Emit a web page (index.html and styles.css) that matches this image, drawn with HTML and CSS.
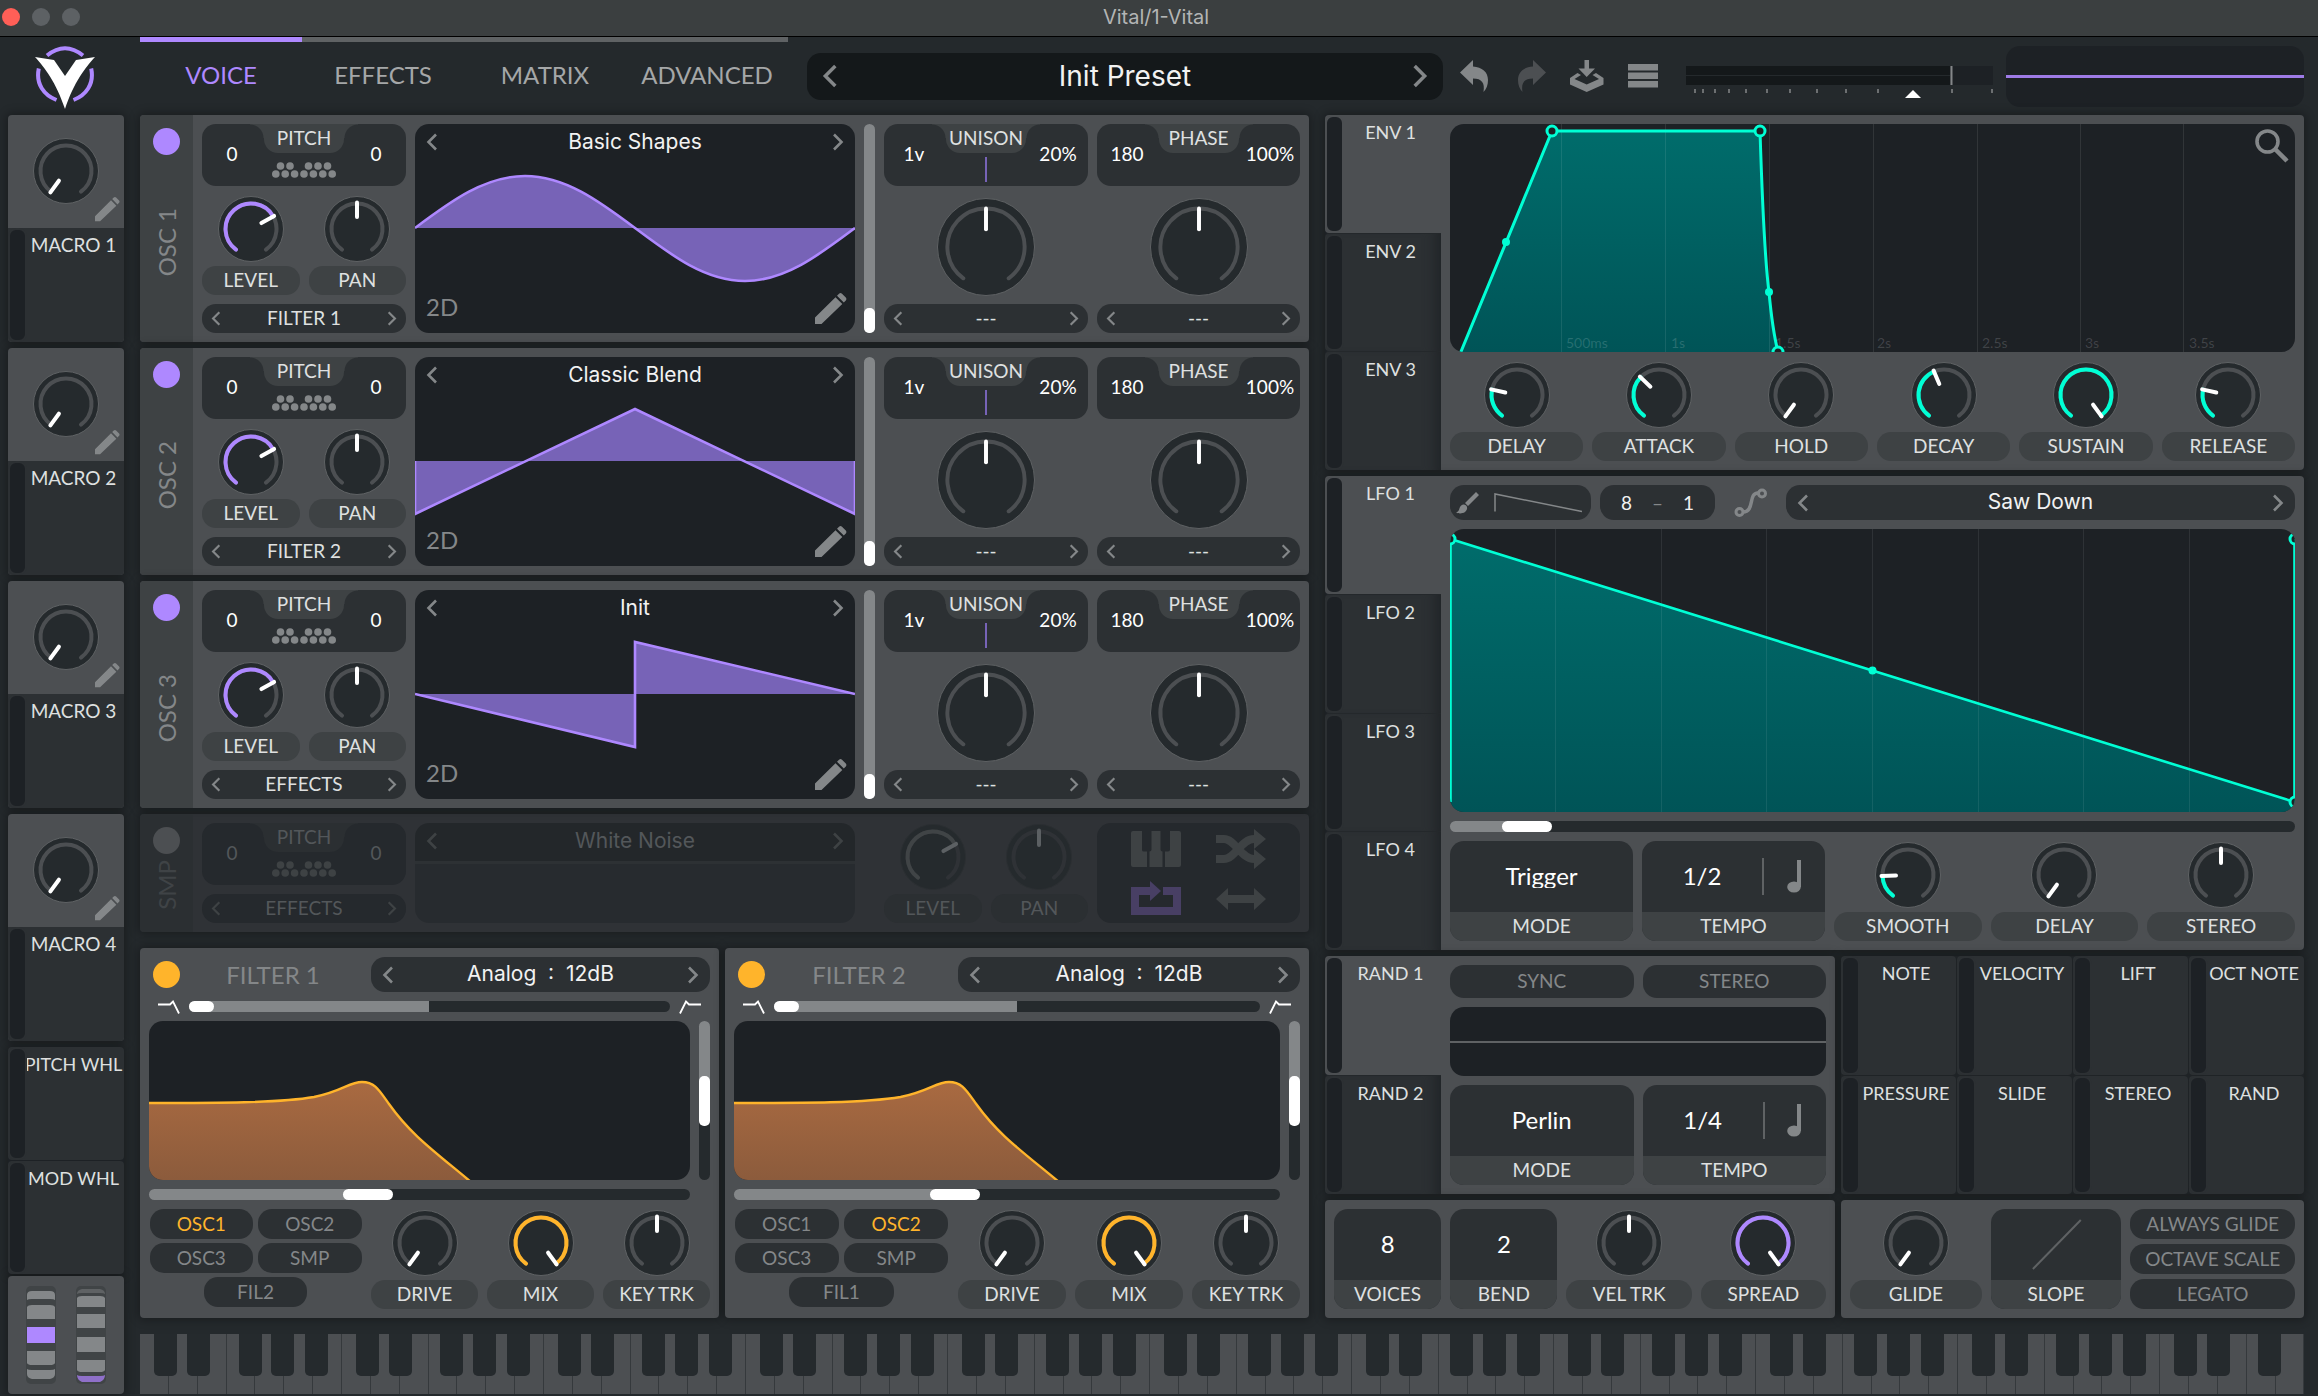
FILE: index.html
```
<!DOCTYPE html>
<html lang="en">
<head>
  <meta charset="UTF-8" />
  <meta name="viewport" content="width=device-width, initial-scale=1.0" />
  <title>Vital/1-Vital</title>
  <link rel="stylesheet" href="styles.css">
</head>
<body>
  <svg class="defs" aria-hidden="true">
    <defs>
      <linearGradient id="teal" x1="0" y1="0" x2="0" y2="1">
        <stop offset="0" stop-color="#006c6b" />
        <stop offset="1" stop-color="#005457" />
      </linearGradient>
      <linearGradient id="amber" x1="0" y1="0" x2="0" y2="1">
        <stop offset="0" stop-color="#a96a41" />
        <stop offset="1" stop-color="#8b5b3c" />
      </linearGradient>
    </defs>
    <symbol id="left" viewBox="0 0 12 18"><path d="M10 1.5L2.5 9l7.500 7.500" fill="none" stroke="currentColor" stroke-width="2.600" /></symbol>
    <symbol id="right" viewBox="0 0 12 18"><path d="M2 1.5L9.500 9 2 16.500" fill="none" stroke="currentColor" stroke-width="2.600" /></symbol>
    <symbol id="pencil" viewBox="0 0 32 32"><path d="M0 31v-6.500L20.500 4.300l6.800 6.800L6.500 31zM22 2.700l2-2q1.500-1.200 3 0l3.800 3.800q1.200 1.500 0 3l-2 2z" fill="currentColor" /></symbol>
    <symbol id="undo" viewBox="0 0 30 33"><path d="M0 12.500L13 0v6.500C22 7 28 12 28 20c0 5-1.500 9-4.500 12C25 23 22 18.500 13 18.500V25z" fill="currentColor" /></symbol>
    <symbol id="save" viewBox="0 0 34 32"><path d="M14.500 0h4.500v8.500h6L16.700 17 8.500 8.500h6zM0 18l7.500-5 3.500 2-6.500 4 12.200 5.500L29 19l-6.500-4 3.500-2 7.500 5v6.500L16.700 32 0 24.500z" fill="currentColor" /></symbol>
    <symbol id="menu" viewBox="0 0 30 24"><path d="M0 0h30v6.500H0zM0 8.500h30V15H0zM0 17h30v6.500H0z" fill="currentColor" /></symbol>
    <symbol id="zoom" viewBox="0 0 34 34"><circle cx="12.500" cy="12.500" r="10.500" fill="none" stroke="currentColor" stroke-width="3.600" /><path d="M20 20l12 12" stroke="currentColor" stroke-width="4.500" /></symbol>
    <symbol id="note" viewBox="0 0 16 33"><ellipse cx="7" cy="27" rx="6.800" ry="5.500" fill="currentColor" /><path d="M10 0h4v27h-4z" fill="currentColor" /></symbol>
    <symbol id="dots" viewBox="0 0 64 16">
      <g fill="currentColor"><circle cx="8.500" cy="4" r="3.800" /><circle cx="18" cy="4" r="3.800" /><circle cx="36.500" cy="4" r="3.800" /><circle cx="46" cy="4" r="3.800" /><circle cx="55.500" cy="4" r="3.800" /><circle cx="3.800" cy="12" r="3.800" /><circle cx="13.200" cy="12" r="3.800" /><circle cx="22.600" cy="12" r="3.800" /><circle cx="32" cy="12" r="3.800" /><circle cx="41.400" cy="12" r="3.800" /><circle cx="50.800" cy="12" r="3.800" /><circle cx="60.200" cy="12" r="3.800" /></g>
    </symbol>
    <symbol id="lowpass" viewBox="0 0 22 14"><path d="M0 4.500h12l3-3 6 12" fill="none" stroke="#fff" stroke-width="1.800" /></symbol>
    <symbol id="highpass" viewBox="0 0 22 14"><path d="M22 4.500H10l-3-3-6 12" fill="none" stroke="#fff" stroke-width="1.800" /></symbol>
  </svg>

  <div class="titlebar">
    <span class="light close"></span><span class="light"></span><span class="light"></span>
    <h1>Vital/1-Vital</h1>
  </div>

  <header class="header">
    <svg class="logo" viewBox="0 0 62 64" role="img" aria-label="Vital">
      <g fill="none" stroke="#ae88ff" stroke-width="4">
        <path d="M13 9.500Q31-5 49 9.500M4.800 22.500C1.500 38 10 49 22.500 54M57.200 22.500C60.500 38 52 49 39.500 54" />
      </g>
      <path d="M1 11l19 3 11 16 11-16 19-3C51 22 40 36 31 63 22 36 11 22 1 11z" fill="#fff" />
    </svg>
    <nav class="tabs">
      <a class="tab active" href="#">VOICE</a>
      <a class="tab" href="#">EFFECTS</a>
      <a class="tab" href="#">MATRIX</a>
      <a class="tab" href="#">ADVANCED</a>
    </nav>
    <div class="preset">
      <button aria-label="Previous preset"><svg><use href="#left" /></svg></button>
      <span>Init Preset</span>
      <button aria-label="Next preset"><svg><use href="#right" /></svg></button>
    </div>
    <div class="actions">
      <button aria-label="Undo"><svg width="30" height="33"><use href="#undo" /></svg></button>
      <button aria-label="Redo" disabled><svg class="mirror" width="30" height="33"><use href="#undo" /></svg></button>
      <button aria-label="Save"><svg width="34" height="32"><use href="#save" /></svg></button>
      <button aria-label="Menu"><svg width="30" height="24"><use href="#menu" /></svg></button>
    </div>
    <svg class="meter" viewBox="0 0 307 44">
      <path d="M265 12h42v19h-42z" fill="#1d2125" />
      <path d="M0 12h264v9H0zM0 22h264v9H0z" fill="#14181a" />
      <path d="M265.500 12v19" stroke="#848789" stroke-width="2" />
      <path d="M9 35v4M17 35v4M29 35v4M43 35v4M60 35v4M81 35v4M104 35v4M131 35v4M160 35v4M192 35v4M266 35v4M306 35v4" stroke="#6c6f71" stroke-width="2" />
      <path d="M219 44l8-8 8 8z" fill="#fff" />
    </svg>
    <div class="scope"></div>
  </header>

  <div class="synth">
    <aside class="sidebar">
      <section class="macro"><div class="macro-top"><div data-knob="0" data-name="Macro 1"></div><svg><use href="#pencil" /></svg></div><div class="mod">MACRO 1</div></section>
      <section class="macro"><div class="macro-top"><div data-knob="0" data-name="Macro 2"></div><svg><use href="#pencil" /></svg></div><div class="mod">MACRO 2</div></section>
      <section class="macro"><div class="macro-top"><div data-knob="0" data-name="Macro 3"></div><svg><use href="#pencil" /></svg></div><div class="mod">MACRO 3</div></section>
      <section class="macro"><div class="macro-top"><div data-knob="0" data-name="Macro 4"></div><svg><use href="#pencil" /></svg></div><div class="mod">MACRO 4</div></section>
      <div class="wheel-mods">
        <div class="mod">PITCH WHL</div>
        <div class="mod">MOD WHL</div>
      </div>
      <div class="wheels">
        <svg viewBox="0 0 30 98">
          <rect width="30" height="98" rx="5" fill="#404446" />
          <path d="M1 14V9q0-4 5-4h18q5 0 5 4v5q-1-1-5-1H6q-4 0-5 1zM1 33V21q1-2 5-2h18q4 0 5 2v12zM1 65h28v12q-1 2-5 2H6q-4 0-5-2zM1 83q1 1 5 1h18q4 0 5-1v5q0 4-5 5H6q-5-1-5-5z" fill="#848789" />
          <path d="M1 41h28v16H1z" fill="#ae88ff" />
        </svg>
        <svg viewBox="0 0 30 98">
          <rect width="30" height="98" rx="5" fill="#404446" />
          <path d="M1 8q0-4 5-5h18q5 1 5 5-1-1-5-1H6q-4 0-5 1z" fill="#5f6264" />
          <path d="M1 21v-9q1-2 5-2h18q4 0 5 2v9zM1 28h28v14H1zM1 51h28v15H1zM1 74h28v10q-1 2-5 2H6q-4 0-5-2z" fill="#848789" />
          <path d="M1 89q1 1 5 1h18q4 0 5-1 0 5-5 7H6q-5-2-5-7z" fill="#8f70c9" />
        </svg>
      </div>
    </aside>

    <main class="main">
      <div class="columns">
        <div class="left">
          <div id="oscillators" class="oscillators"></div>

          <section class="panel osc smp">
            <div class="strip"><input type="checkbox" class="power" aria-label="Sample on" /><h2>SMP</h2></div>
            <div class="osc-body">
              <div class="stack">
                <div class="valuebox"><span>0</span><b>PITCH</b><svg class="keydots"><use href="#dots" /></svg><span>0</span></div>
                <div data-stepper="EFFECTS" data-name="Sample destination"></div>
              </div>
              <div class="display sample">
                <div class="display-nav"><button aria-label="Previous sample"><svg><use href="#left" /></svg></button><span>White Noise</span><button aria-label="Next sample"><svg><use href="#right" /></svg></button></div>
              </div>
              <span></span>
              <div class="knob-row">
                <div data-knob="71" data-label="LEVEL" data-color="#404446"></div>
                <div data-knob="50" data-label="PAN"></div>
              </div>
              <div class="sample-modes">
                <button aria-label="Keytrack"><svg viewBox="0 0 50 36"><path d="M2 0h9v19q0 1.500 2 1.500h3V36H2q-2 0-2-2V2q0-2 2-2zM18.500 20.500q2 0 2-2V0h9v18.500q0 2 2 2V36h-13zM39 0h9q2 0 2 2v32q0 2-2 2H34V20.500h3q2 0 2-2z" fill="currentColor" /></svg></button>
                <button aria-label="Random phase"><svg viewBox="0 0 50 40"><path d="M0 10h8c11 0 17 20 30 20M0 30h8c11 0 17-20 30-20" fill="none" stroke="currentColor" stroke-width="8" /><path d="M38 0l12 10-12 10zM38 20l12 10-12 10z" fill="currentColor" /></svg></button>
                <button class="on" aria-label="Loop"><svg viewBox="0 0 50 36"><path d="M20 10H4v20h42V10H32" fill="none" stroke="currentColor" stroke-width="8" /><path d="M19 0l11 10-11 10z" fill="currentColor" /></svg></button>
                <button aria-label="Bounce"><svg viewBox="0 0 50 22"><path d="M0 11L12 0v7h26V0l12 11-12 11v-7H12v7z" fill="currentColor" /></svg></button>
              </div>
            </div>
          </section>

          <div id="filters" class="filters"></div>
        </div>

        <div class="right">
          <section class="panel modulator">
            <div class="mod-tabs">
              <button class="mod active">ENV 1</button>
              <button class="mod">ENV 2</button>
              <button class="mod">ENV 3</button>
            </div>
            <div class="mod-body">
              <div class="display env">
                <svg viewBox="0 0 845 228" preserveAspectRatio="none">
                  <path d="M10 228L102 7h208C312 70 314 130 319 168c2 22 5 44 9 60z" fill="url(#teal)" />
                  <path d="M111.500 0v228M215.500 0v228M319.500 0v228M423.500 0v228M527.500 0v228M630.500 0v228M733.500 0v228" stroke="#fff" stroke-opacity=".09" />
                  <g fill="#fff" fill-opacity=".16" class="time">
                    <text x="116" y="224">500ms</text><text x="221" y="224">1s</text><text x="325" y="224">1.5s</text><text x="427" y="224">2s</text><text x="532" y="224">2.5s</text><text x="635" y="224">3s</text><text x="739" y="224">3.5s</text>
                  </g>
                  <path d="M10 230L102 7h208C312 70 314 130 319 168c2 22 5 44 9 60" fill="none" stroke="#00ffd5" stroke-width="3" />
                  <circle cx="56" cy="118" r="4" fill="#00ffd5" /><circle cx="319" cy="168" r="4" fill="#00ffd5" />
                  <g fill="#1d2125" stroke="#00ffd5" stroke-width="3"><circle cx="102" cy="7" r="5" /><circle cx="310" cy="7" r="5" /><circle cx="328" cy="228" r="5" /></g>
                </svg>
                <button class="magnify" aria-label="Zoom"><svg width="34" height="34"><use href="#zoom" /></svg></button>
              </div>
              <div class="knob-row">
                <div data-knob="23" data-label="DELAY" data-color="#00ffd5"></div>
                <div data-knob="34" data-label="ATTACK" data-color="#00ffd5"></div>
                <div data-knob="0" data-label="HOLD"></div>
                <div data-knob="42" data-label="DECAY" data-color="#00ffd5"></div>
                <div data-knob="100" data-label="SUSTAIN" data-color="#00ffd5"></div>
                <div data-knob="23" data-label="RELEASE" data-color="#00ffd5"></div>
              </div>
            </div>
          </section>

          <section class="panel modulator">
            <div class="mod-tabs">
              <button class="mod active">LFO 1</button>
              <button class="mod">LFO 2</button>
              <button class="mod">LFO 3</button>
              <button class="mod">LFO 4</button>
            </div>
            <div class="mod-body">
              <div class="lfo-tools">
                <button class="box" aria-label="Paint shape"><svg viewBox="0 0 141 35"><path d="M15 18L26 7l3 3-11 11zM14 19.500c4 1 4 5 1 7.500-3 2-7 1.500-9 .5 3-1 3-3 4-5.500 1-2 2.500-2.800 4-2.500z" fill="#848789" /><path d="M45 26.500V9l87 17.500" fill="none" stroke="#848789" stroke-width="1.500" /></svg></button>
                <div class="box grid-size"><span>8</span><i>–</i><span>1</span></div>
                <button class="bare" aria-label="Smooth"><svg width="34" height="30" viewBox="0 0 34 30"><path d="M9 24c12 0 5-19 15-19" fill="none" stroke="#848789" stroke-width="3.500" /><g fill="none" stroke="#848789" stroke-width="3"><circle cx="5.500" cy="24" r="3.500" /><circle cx="28" cy="5.500" r="3.500" /></g></svg></button>
                <div class="stepper tall wide"><button aria-label="Previous shape"><svg><use href="#left" /></svg></button><select aria-label="LFO shape"><option>Saw Down</option></select><button aria-label="Next shape"><svg><use href="#right" /></svg></button></div>
              </div>
              <div class="display lfo">
                <svg viewBox="0 0 845 283" preserveAspectRatio="none">
                  <path d="M0 10L845 273v10H0z" fill="url(#teal)" />
                  <path d="M105.500 0v283M211.500 0v283M316.500 0v283M422.500 0v283M528.500 0v283M633.500 0v283M739.500 0v283" stroke="#fff" stroke-opacity=".08" />
                  <path d="M.5 273V10L844.500 273V10" fill="none" stroke="#00ffd5" stroke-width="2.600" stroke-linejoin="bevel" />
                  <circle cx="422.500" cy="141.500" r="4" fill="#00ffd5" />
                  <g fill="#1d2125" stroke="#00ffd5" stroke-width="3"><circle cx="0" cy="10" r="5" /><circle cx="845" cy="10" r="5" /><circle cx="845" cy="273" r="5" /></g>
                </svg>
              </div>
              <input type="range" class="slider wide-thumb" step="0.5" value="6.5" style="--fill: 8%" aria-label="LFO rate" />
              <div class="lfo-bottom">
                <div class="choice"><select id="lfo-mode"><option>Trigger</option></select><label for="lfo-mode">MODE</label></div>
                <div class="choice tempo"><select id="lfo-tempo"><option>1/2</option></select><svg><use href="#note" /></svg><label for="lfo-tempo">TEMPO</label></div>
                <div class="knob-row">
                  <div data-knob="18" data-label="SMOOTH" data-color="#00ffd5"></div>
                  <div data-knob="0" data-label="DELAY"></div>
                  <div data-knob="50" data-label="STEREO"></div>
                </div>
              </div>
            </div>
          </section>

          <div class="split">
            <section class="panel modulator">
              <div class="mod-tabs">
                <button class="mod active">RAND 1</button>
                <button class="mod">RAND 2</button>
              </div>
              <div class="mod-body rand">
                <div class="pair"><button class="toggle">SYNC</button><button class="toggle">STEREO</button></div>
                <div class="display rand-view"></div>
                <div class="pair">
                  <div class="choice"><select id="rand-mode"><option>Perlin</option></select><label for="rand-mode">MODE</label></div>
                  <div class="choice tempo"><select id="rand-tempo"><option>1/4</option></select><svg><use href="#note" /></svg><label for="rand-tempo">TEMPO</label></div>
                </div>
              </div>
            </section>
            <section class="sources">
              <div class="mod">NOTE</div><div class="mod">VELOCITY</div><div class="mod">LIFT</div><div class="mod">OCT NOTE</div>
              <div class="mod">PRESSURE</div><div class="mod">SLIDE</div><div class="mod">STEREO</div><div class="mod">RAND</div>
            </section>
          </div>

          <div class="split">
            <section class="panel voices">
              <div class="choice"><input id="voices" value="8" /><label for="voices">VOICES</label></div>
              <div class="choice"><input id="bend" value="2" /><label for="bend">BEND</label></div>
              <div data-knob="50" data-label="VEL TRK"></div>
              <div data-knob="100" data-label="SPREAD" data-color="#ae88ff"></div>
            </section>
            <section class="panel glide">
              <div data-knob="0" data-label="GLIDE"></div>
              <div class="choice"><button id="slope"><svg class="slope" viewBox="0 0 131 71"><path d="M42 60L90 11" stroke="#5f6264" stroke-width="2" /></svg></button><label for="slope">SLOPE</label></div>
              <div class="glide-modes"><button class="toggle">ALWAYS GLIDE</button><button class="toggle">OCTAVE SCALE</button><button class="toggle">LEGATO</button></div>
            </section>
          </div>
        </div>
      </div>

      <div id="keyboard" class="keyboard"></div>
    </main>
  </div>

  <script src="script.js"></script>
</body>
</html>
```

FILE: styles.css
```
* {
  box-sizing: border-box;
}

body {
  margin: 0;
  background: #24292c;
  color: #dfe0e0;
  font-family: Lato, sans-serif;
  font-size: 19px;
  line-height: 24px;
  overflow-x: hidden;
}

h1, h2 {
  margin: 0;
  font-weight: 400;
}

button, input, select {
  font: inherit;
  color: inherit;
  background: none;
  border: 0;
  margin: 0;
  padding: 0;
  min-width: 0;
}

svg {
  display: block;
}

.defs {
  position: absolute;
  width: 0;
  height: 0;
}

/* window + header */

.titlebar {
  display: flex;
  align-items: center;
  gap: 12px;
  height: 37px;
  padding: 0 0 2px 2px;
  background: #3b3f40;
  border-bottom: 1px solid #000;
}

.titlebar h1 {
  flex: 1;
  padding-right: 98px;
  text-align: center;
  font-family: Inter, sans-serif;
  font-size: 20px;
  color: #b3b5b5;
}

.light {
  width: 18px;
  height: 18px;
  border-radius: 50%;
  background: #5d6164;
}

.light.close {
  background: #ff5f57;
}

.header {
  display: flex;
  align-items: center;
  height: 78px;
  padding: 0 14px 0 8px;
}

.logo {
  width: 62px;
  height: 64px;
  margin: 3px 44px 0 26px;
}

.tabs {
  display: flex;
  flex: 0 0 648px;
  align-self: stretch;
}

.tab {
  flex: 1;
  padding-top: 21px;
  border-top: 5px solid #5f6264;
  text-align: center;
  text-decoration: none;
  font-size: 24px;
  color: #a5a7a8;
}

.tab.active {
  border-color: #ae88ff;
  color: #ae88ff;
}

.preset {
  display: flex;
  flex: 1;
  align-items: center;
  justify-content: space-between;
  height: 47px;
  margin: 0 4px 0 19px;
  padding: 0 15px;
  border-radius: 14px;
  background: #14181a;
  color: #f2f2f2;
  font-family: Inter, sans-serif;
  font-size: 28px;
}

.preset svg {
  width: 16px;
  height: 24px;
  color: #848789;
}

.actions {
  display: flex;
  margin-right: 15px;
  color: #848789;
}

.actions button {
  display: flex;
  justify-content: center;
  align-items: center;
  width: 56px;
}

.actions button:disabled {
  color: #4c4f52;
}

.mirror {
  transform: scaleX(-1);
}

.meter {
  width: 307px;
  height: 44px;
}

.scope {
  width: 298px;
  height: 61px;
  margin-left: 13px;
  border-radius: 14px;
  background: linear-gradient(#9e7be6, #9e7be6) center / 100% 3px no-repeat #1d2125;
}

/* page columns */

.synth {
  display: flex;
  gap: 16px;
  padding: 0 14px 2px 8px;
}

.sidebar {
  display: flex;
  flex: 0 0 116px;
  flex-direction: column;
  gap: 6px;
}

.main {
  flex: 1;
  min-width: 0;
}

.columns {
  display: grid;
  grid-template-columns: 1169fr 979fr;
  gap: 16px;
}

.right, .oscillators {
  display: flex;
  flex-direction: column;
  gap: 6px;
}

.panel, .macro, .wheels, .wheel-mods, .sources {
  border-radius: 4px;
  background: #4c4f52;
  box-shadow: 0 0 10px 2px rgba(0, 0, 0, 0.3);
}

/* modulation sources */

.mod {
  display: flex;
  flex: 1;
  align-items: flex-start;
  justify-content: center;
  position: relative;
  padding: 5px 0 0 15px;
  border-radius: 4px;
  background: #2c3033;
  font-size: 18px;
  white-space: nowrap;
}

.mod::before {
  content: "";
  position: absolute;
  left: 0;
  top: 0;
  bottom: 0;
  width: 15px;
  border: 2px solid #2c3033;
  border-radius: 8px;
  background: #1d2125;
}

.mod.active, .mod.active::before {
  border-color: #4c4f52;
}

.mod.active {
  background: #4c4f52;
}

.macro {
  display: flex;
  flex-direction: column;
  height: 227px;
  overflow: hidden;
}

.macro-top {
  position: relative;
  height: 113px;
  padding-top: 23px;
}

.macro-top > svg {
  position: absolute;
  right: 4px;
  bottom: 6px;
  width: 25px;
  height: 25px;
  color: #848789;
}

.macro .mod {
  border-radius: 0;
  font-size: 19px;
}

.wheel-mods {
  display: flex;
  flex-direction: column;
  gap: 1px;
  height: 227px;
  margin-bottom: -4px;
  background: #1d2125;
}

.wheels {
  display: flex;
  justify-content: center;
  gap: 20px;
  height: 118px;
  padding-top: 10px;
}

.wheels svg {
  width: 30px;
  height: 98px;
}

/* knobs */

.knob-cell {
  display: flex;
  flex-direction: column;
  align-items: center;
  min-width: 0;
  height: 100px;
  padding-top: 1px;
}

.knob {
  position: relative;
  width: 66px;
  height: 66px;
  margin: 0 auto;
}

.knob svg {
  width: 100%;
  height: 100%;
}

.knob input {
  position: absolute;
  inset: 0;
  width: 100%;
  height: 100%;
  opacity: 0;
}

.knob-cell label {
  width: 100%;
  height: 29px;
  margin-top: 4px;
  border-radius: 14px;
  background: #3e4244;
  text-align: center;
  line-height: 28px;
}

.knob-cell.big {
  padding-top: 3px;
}

.big .knob {
  width: 98px;
  height: 98px;
}

.knob-row {
  display: grid;
  grid-auto-flow: column;
  grid-auto-columns: 1fr;
  gap: 9px;
}

/* oscillators */

.osc {
  display: flex;
}

.strip {
  display: flex;
  flex: 0 0 53px;
  flex-direction: column;
  align-items: center;
  border-radius: 4px 0 0 4px;
  background: #3e4244;
}

.strip h2 {
  margin-top: 53px;
  writing-mode: vertical-rl;
  transform: rotate(180deg);
  font-size: 24px;
  line-height: 28px;
  color: #848789;
}

.power {
  appearance: none;
  flex: none;
  width: 27px;
  height: 27px;
  margin-top: 13px;
  border-radius: 50%;
  background: #4c4f52;
}

.power:checked {
  background: var(--accent, #ae88ff);
}

.osc-body {
  display: grid;
  flex: 1;
  grid-template-columns: 204px 1fr 11px 204px 203px;
  gap: 9px;
  padding: 9px;
}

.stack {
  display: flex;
  flex-direction: column;
  gap: 9px;
}

.valuebox {
  display: grid;
  position: relative;
  grid-template-columns: 60px 1fr 60px;
  height: 62px;
  border-radius: 14px;
  background: #2c3033;
  text-align: center;
}

.valuebox span {
  grid-row: 1;
  grid-column: 1;
  padding-top: 18px;
  color: #fff;
}

.valuebox span:last-child {
  grid-column: 3;
}

.valuebox b {
  grid-row: 1;
  grid-column: 2;
  justify-self: center;
  position: relative;
  width: 80px;
  height: 29px;
  border-radius: 0 0 14px 14px;
  background: #3e4244;
  font-weight: 400;
  line-height: 28px;
}

.valuebox b::before, .valuebox b::after {
  content: "";
  position: absolute;
  top: 0;
  left: -14px;
  width: 14px;
  height: 14px;
  background: radial-gradient(circle at 0 100%, transparent 13px, #3e4244 14px);
}

.valuebox b::after {
  left: 80px;
  background: radial-gradient(circle at 100% 100%, transparent 13px, #3e4244 14px);
}

.keydots {
  grid-row: 1;
  grid-column: 2;
  place-self: end center;
  width: 64px;
  height: 16px;
  margin-bottom: 8px;
  color: #848789;
}

.unison-line {
  grid-row: 1;
  grid-column: 2;
  place-self: end center;
  width: 2px;
  height: 25px;
  margin-bottom: 4px;
  background: #7763b7;
}

.stepper {
  display: flex;
  align-items: center;
  height: 29px;
  padding: 0 9px;
  border-radius: 14px;
  background: #2c3033;
}

.stepper select {
  flex: 1;
  appearance: none;
  padding-bottom: 1px;
  text-align: center;
  text-align-last: center;
}

.stepper svg {
  width: 10px;
  height: 15px;
  color: #848789;
}

.stepper.tall {
  height: 35px;
  padding: 0 11px;
}

.stepper.tall svg {
  width: 12px;
  height: 18px;
}

.wide, .display-nav {
  font-family: Inter, sans-serif;
  font-size: 21px;
  color: #f2f2f2;
}

.display {
  position: relative;
  overflow: hidden;
  border-radius: 14px;
  background: #1d2125;
}

.wave {
  height: 209px;
}

.display > svg {
  width: 100%;
  height: 100%;
}

.display-nav {
  display: flex;
  position: absolute;
  top: 0;
  left: 0;
  right: 0;
  align-items: center;
  justify-content: space-between;
  height: 35px;
  padding: 0 11px;
}

.display-nav svg {
  width: 12px;
  height: 18px;
  color: #848789;
}

.wave-mode {
  position: absolute;
  left: 11px;
  bottom: 12px;
  font-size: 24px;
  line-height: 28px;
  color: #848789;
}

.wave .edit {
  position: absolute;
  right: 8px;
  bottom: 8px;
  color: #848789;
}

.edit svg {
  width: 32px;
  height: 32px;
}

.smp {
  --off: #53575a;
  margin-top: 6px;
  background: #2f3236;
  color: var(--off);
}

.smp .strip {
  background: #2b2f32;
}

.smp .strip h2 {
  margin-top: 6px;
  color: #3f4346;
}

.smp .valuebox, .smp .stepper, .smp .sample-modes {
  background: #25292d;
}

.smp .valuebox b, .smp .knob-cell label {
  background: #2b2f32;
}

.smp .valuebox b::before {
  background: radial-gradient(circle at 0 100%, transparent 13px, #2b2f32 14px);
}

.smp .valuebox b::after {
  background: radial-gradient(circle at 100% 100%, transparent 13px, #2b2f32 14px);
}

.smp .valuebox span, .smp .display-nav {
  color: var(--off);
}

.smp .keydots, .smp .stepper svg, .smp .display-nav svg {
  color: #3e4244;
}

.sample {
  background: linear-gradient(#23272a 38px, #2d3134 38px, #2d3134 41px, #272b2f 41px);
}

.sample-modes {
  display: grid;
  grid-template-columns: 1fr 1fr;
  place-items: center;
  padding: 0 16px;
  border-radius: 14px;
  color: #3e4244;
}

.sample-modes svg {
  width: 50px;
}

.sample-modes .on {
  color: #483f64;
}

.osc-slider, .filter-slider {
  appearance: none;
  width: 11px;
  height: 100%;
  writing-mode: vertical-lr;
  direction: rtl;
  border-radius: 6px;
  background: #848789;
}

.osc-slider::-webkit-slider-thumb {
  appearance: none;
  width: 11px;
  height: 25px;
  border-radius: 5px;
  background: #fff;
}

.slider {
  appearance: none;
  display: block;
  width: 100%;
  height: 11px;
  border-radius: 6px;
  background: linear-gradient(to right, #848789 var(--fill), #252a2d var(--fill));
}

.slider::-webkit-slider-thumb {
  appearance: none;
  width: 25px;
  height: 11px;
  border-radius: 6px;
  background: #fff;
}

.wide-thumb::-webkit-slider-thumb {
  width: 50px;
}

/* filters */

.filters {
  display: grid;
  grid-template-columns: 579fr 584fr;
  gap: 6px;
  margin-top: 16px;
}

.filter {
  --accent: #ffb42b;
  display: flex;
  flex-direction: column;
  gap: 9px;
  padding: 9px;
}

.filter-top, .filter-bottom {
  display: grid;
  grid-template-columns: 213fr 339fr;
  gap: 9px;
}

.filter-title {
  display: flex;
  align-items: center;
}

.filter-title .power {
  margin: 0 4px;
}

.filter-title h2 {
  flex: 1;
  text-align: center;
  font-size: 24px;
  color: #848789;
}

.blend {
  display: flex;
  align-items: center;
  gap: 9px;
  height: 11px;
  padding: 0 9px;
}

.blend svg {
  flex: none;
  width: 22px;
  height: 14px;
}

.filter-view {
  display: grid;
  grid-template-columns: 1fr 11px;
  gap: 9px;
}

.filter-view .display {
  height: 159px;
}

.filter-slider {
  background: linear-gradient(#848789 50%, #252a2d 50%);
}

.filter-slider::-webkit-slider-thumb {
  appearance: none;
  width: 11px;
  height: 50px;
  border-radius: 5px;
  background: #fff;
}

.inputs {
  display: flex;
  flex-wrap: wrap;
  justify-content: center;
  align-content: flex-start;
  gap: 4px 5px;
}

.toggle {
  height: 30px;
  padding-bottom: 1px;
  border-radius: 14px;
  background: #2c3033;
  color: #848789;
}

.inputs .toggle {
  width: calc(50% - 3px);
}

.toggle.on {
  color: #ffb42b;
}

/* right column */

.modulator {
  display: flex;
}

.mod-tabs {
  display: flex;
  flex: 0 0 116px;
  flex-direction: column;
  background: #1d2125;
}

.mod-tabs .mod {
  border-top: 1px solid #24282b;
  border-radius: 4px 0 0 4px;
}

.mod-tabs .mod:not(.active) {
  box-shadow: inset -16px 0 14px -12px #1f2326;
}

.mod-tabs .mod.active {
  border-top: 0;
}

.mod-body {
  display: flex;
  flex: 1;
  min-width: 0;
  flex-direction: column;
  gap: 9px;
  padding: 9px;
}

.env {
  height: 228px;
}

.time {
  font-size: 14px;
}

.magnify {
  position: absolute;
  top: 5px;
  right: 6px;
  color: #848789;
}

.lfo-tools {
  display: grid;
  grid-template-columns: 141px 115px 53px 1fr;
  gap: 9px;
}

.box {
  height: 35px;
  border-radius: 14px;
  background: #2c3033;
}

.grid-size {
  display: flex;
  align-items: center;
  justify-content: space-between;
  padding: 0 21px;
  color: #f2f2f2;
}

.grid-size i {
  font-style: normal;
  color: #848789;
}

.bare {
  display: grid;
  place-items: center;
}

.lfo {
  height: 283px;
}

.lfo-bottom {
  display: grid;
  grid-template-columns: 183fr 183fr 461fr;
  gap: 9px;
}

.choice {
  display: grid;
  grid-template: 71px 29px / 1fr;
  position: relative;
  overflow: hidden;
  border-radius: 14px;
  background: #2c3033;
  text-align: center;
}

.choice select, .choice input {
  appearance: none;
  width: 100%;
  padding-bottom: 2px;
  text-align: center;
  text-align-last: center;
  font-size: 24px;
  color: #fff;
}

.choice label {
  grid-column: 1 / -1;
  background: #3e4244;
  line-height: 28px;
}

.tempo {
  grid-template-columns: 2fr 1fr;
}

.tempo svg {
  place-self: center;
  width: 16px;
  height: 33px;
  color: #848789;
}

.tempo select {
  height: 37px;
  align-self: center;
  border-right: 2px solid #5f6264;
}

.split {
  display: grid;
  grid-template-columns: 510fr 463fr;
  gap: 6px;
}

.pair {
  display: grid;
  grid-template-columns: 1fr 1fr;
  gap: 9px;
}

.pair .toggle {
  height: 33px;
}

.rand-view {
  height: 69px;
  background: linear-gradient(#5f6264, #5f6264) center / 100% 2px no-repeat #1d2125;
}

.sources {
  display: grid;
  grid-template-columns: repeat(4, 1fr);
  grid-auto-rows: 1fr;
  gap: 1px;
  background: #1f2326;
}

.voices, .glide {
  display: grid;
  grid-template-columns: 107fr 107fr 125fr 125fr;
  gap: 9px;
  padding: 9px;
}

.glide {
  grid-template-columns: 132fr 131fr 165fr;
}

.slope {
  width: 100%;
  height: 71px;
}

.glide-modes {
  display: flex;
  flex-direction: column;
  justify-content: space-between;
}

/* keyboard */

.keyboard {
  position: relative;
  display: flex;
  height: 60px;
  margin-top: 16px;
}

.key {
  flex: 1;
  border-right: 1px solid #35393c;
  background: #4c4f52;
}

.key:last-child {
  border: 0;
}

.key.black {
  position: absolute;
  top: 0;
  width: 23px;
  height: 42px;
  margin-left: -12px;
  border: 0;
  border-radius: 0 0 5px 5px;
  background: #252a2d;
}
```

FILE: script.js
```
const icon = name => `<svg><use href="#${name}" /></svg>`;

// knob travel is 288 degrees, from -144 to 144
function polar(angle, r) {
  const a = angle * Math.PI / 180;
  return [(Math.sin(a) * r).toFixed(1), (-Math.cos(a) * r).toFixed(1)];
}

function arc(from, to, r) {
  const large = to - from > 180 ? 1 : 0;
  return `M${polar(from, r)}A${r} ${r} 0 ${large} 1 ${polar(to, r)}`;
}

function knobSvg(value, color, big) {
  const size = big ? 49 : 32.5;
  const r = big ? 39 : 25.5;
  const angle = value * 2.88 - 144;
  const [x1, y1] = polar(angle, big ? 18 : 12);
  const [x2, y2] = polar(angle, big ? 39 : 26.5);
  const box = size + 0.5;
  return `<svg viewBox="${-box} ${-box} ${box * 2} ${box * 2}">
    <circle class="face" r="${size}" fill="#252a2d" stroke="#5f6264" stroke-width="1" />
    <g fill="none" stroke-width="4" stroke-linecap="round">
      <path class="track" d="${arc(-144, 144, r)}" stroke="#4c4f52" />
      ${color ? `<path d="${arc(-144, angle, r)}" stroke="${color}" />` : ""}
      <path class="hand" d="M${x1} ${y1}L${x2} ${y2}" stroke="#fff" />
    </g>
  </svg>`;
}

function stepper(text, name, extra = "") {
  return `<div class="stepper ${extra}">
    <button aria-label="Previous">${icon("left")}</button>
    <select aria-label="${name}"><option>${text}</option></select>
    <button aria-label="Next">${icon("right")}</button>
  </div>`;
}

const oscillators = [
  {
    name: "OSC 1", wave: "Basic Shapes", out: "FILTER 1",
    line: "M0 104C36 77 70 52 110 52S184 77 220 104 290 157 330 157 404 131 440 104"
  },
  { name: "OSC 2", wave: "Classic Blend", out: "FILTER 2", line: "M0 104V157L220 52 440 157V104" },
  { name: "OSC 3", wave: "Init", out: "EFFECTS", line: "M0 104L220 157V52L440 104" }
];

document.getElementById("oscillators").innerHTML = oscillators.map(o => `
  <section class="panel osc">
    <div class="strip"><input type="checkbox" class="power" checked aria-label="${o.name} on" /><h2>${o.name}</h2></div>
    <div class="osc-body">
      <div class="stack">
        <div class="valuebox"><span>0</span><b>PITCH</b><svg class="keydots"><use href="#dots" /></svg><span>0</span></div>
        <div class="knob-row">
          <div data-knob="71" data-label="LEVEL" data-color="#ae88ff"></div>
          <div data-knob="50" data-label="PAN"></div>
        </div>
        ${stepper(o.out, o.name + " destination")}
      </div>
      <div class="display wave">
        <svg viewBox="0 0 440 209" preserveAspectRatio="none"><path d="${o.line}" fill="#7763b7" stroke="#ae88ff" stroke-width="2.600" /></svg>
        <div class="display-nav"><button aria-label="Previous wavetable">${icon("left")}</button><span>${o.wave}</span><button aria-label="Next wavetable">${icon("right")}</button></div>
        <button class="wave-mode">2D</button>
        <button class="edit" aria-label="Edit wavetable">${icon("pencil")}</button>
      </div>
      <input type="range" class="osc-slider" value="0" aria-label="${o.name} frame" />
      <div class="stack">
        <div class="valuebox"><span>1v</span><b>UNISON</b><i class="unison-line"></i><span>20%</span></div>
        <div data-knob="50" data-big data-name="Unison detune"></div>
        ${stepper("---", "Spectral morph")}
      </div>
      <div class="stack">
        <div class="valuebox"><span>180</span><b>PHASE</b><span>100%</span></div>
        <div data-knob="50" data-big data-name="Phase distortion"></div>
        ${stepper("---", "Distortion type")}
      </div>
    </div>
  </section>`).join("");

const filters = [
  { name: "FILTER 1", on: "OSC1", other: "FIL2" },
  { name: "FILTER 2", on: "OSC2", other: "FIL1" }
];

const curve = "M-3 82C70 82 130 82 165 76 194 70 200 61 213 61S230 69 240 83C262 114 285 130 322 161";

document.getElementById("filters").innerHTML = filters.map(f => `
  <section class="panel filter">
    <div class="filter-top">
      <div class="filter-title"><input type="checkbox" class="power" checked aria-label="${f.name} on" /><h2>${f.name}</h2></div>
      ${stepper("Analog &nbsp;:&nbsp; 12dB", f.name + " model", "tall wide")}
    </div>
    <div class="blend">${icon("lowpass")}<input type="range" class="slider" value="0" style="--fill: 50%" aria-label="Blend" />${icon("highpass")}</div>
    <div class="filter-view">
      <div class="display"><svg viewBox="0 0 541 159" preserveAspectRatio="none"><path d="${curve}H-3z" fill="url(#amber)" /><path d="${curve}" fill="none" stroke="#ffb42b" stroke-width="2.400" /></svg></div>
      <input type="range" class="filter-slider" value="50" aria-label="Resonance" />
    </div>
    <div class="filter-view"><input type="range" class="slider wide-thumb" step="0.5" value="39.5" style="--fill: 40%" aria-label="Cutoff" /></div>
    <div class="filter-bottom">
      <div class="inputs">${["OSC1", "OSC2", "OSC3", "SMP", f.other].map(t => `<button class="toggle${t === f.on ? " on" : ""}">${t}</button>`).join("")}</div>
      <div class="knob-row">
        <div data-knob="0" data-label="DRIVE"></div>
        <div data-knob="100" data-label="MIX" data-color="#ffb42b"></div>
        <div data-knob="50" data-label="KEY TRK"></div>
      </div>
    </div>
  </section>`).join("");

document.querySelectorAll("[data-stepper]").forEach(el => {
  el.outerHTML = stepper(el.dataset.stepper, el.dataset.name);
});

document.querySelectorAll("[data-knob]").forEach((el, i) => {
  const d = el.dataset;
  const big = "big" in d;
  const id = "knob" + i;
  let svg = knobSvg(Number(d.knob), d.color, big);
  if (el.closest(".smp")) {
    svg = svg.replace("#5f6264", "#2b2f32").replace("#4c4f52", "#2f3236").replace("#fff", "#5c6063");
  }
  const aria = d.label ? "" : ` aria-label="${d.name || "Knob"}"`;
  el.innerHTML = `<div class="knob">${svg}<input type="range" id="${id}" value="${d.knob}"${aria} /></div>` +
    (d.label ? `<label for="${id}">${d.label}</label>` : "");
  if (d.label || big) el.classList.add("knob-cell");
  if (big) el.classList.add("big");
});

// 75 white keys, C to G
const keyboard = document.getElementById("keyboard");
const whites = 75;
const offsets = [0.915, 2.06, 3.83, 4.97, 6.13];
let keys = "";
for (let i = 0; i < whites; i++) keys += `<span class="key"></span>`;
for (let octave = 0; octave * 7 < whites; octave++) {
  offsets.forEach(o => {
    const pos = octave * 7 + o;
    if (pos < whites - 0.5) keys += `<span class="key black" style="left: ${(pos / whites * 100).toFixed(3)}%"></span>`;
  });
}
keyboard.innerHTML = keys;
```
